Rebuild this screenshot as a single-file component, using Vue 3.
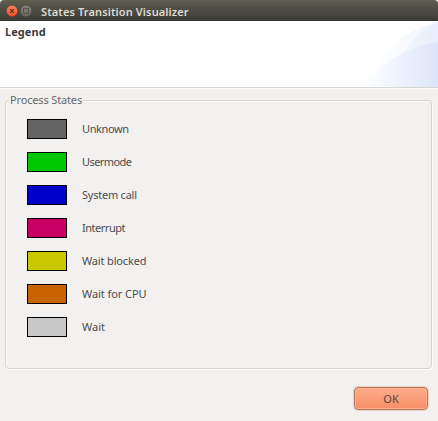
<script setup>
const states = [
  { name: 'Unknown', color: '#646464', width: 47 },
  { name: 'Usermode', color: '#00c800', width: 50 },
  { name: 'System call', color: '#0000c8', width: 55 },
  { name: 'Interrupt', color: '#c80064', width: 43.5 },
  { name: 'Wait blocked', color: '#c8c800', width: 64.5 },
  { name: 'Wait for CPU', color: '#c86400', width: 64.5 },
  { name: 'Wait', color: '#c8c8c8', width: 23 },
]
</script>

<template>
  <div class="window">
    <header class="titlebar">
      <svg class="controls" width="29" height="21" viewBox="0 0 29 21">
        <defs>
          <linearGradient id="close" x1="0" y1="0" x2="0" y2="1">
            <stop offset="0" stop-color="#f78360" />
            <stop offset="1" stop-color="#e9531f" />
          </linearGradient>
          <linearGradient id="max" x1="0" y1="0" x2="0" y2="1">
            <stop offset="0" stop-color="#85837c" />
            <stop offset="1" stop-color="#65645e" />
          </linearGradient>
        </defs>
        <circle cx="7" cy="11" r="5.7" fill="url(#close)" stroke="#46342b" stroke-width=".4" />
        <path d="M5.2 9.2l3.6 3.6M8.8 9.2l-3.6 3.6" stroke="#5a2c1c" stroke-width="1.1" />
        <circle cx="21" cy="11" r="5.7" fill="url(#max)" stroke="#44433d" stroke-width=".4" />
        <rect x="18.5" y="8.5" width="5" height="5" fill="none" stroke="#55544d" />
      </svg>
      <h1>States Transition Visualizer</h1>
    </header>
    <section class="banner">
      <h2>Legend</h2>
      <svg class="swoosh" width="75" height="66" viewBox="0 0 75 66">
        <defs>
          <linearGradient id="outer" gradientUnits="userSpaceOnUse" x1="5" x2="60" y1="0" y2="0">
            <stop offset="0" stop-color="#fff" />
            <stop offset="1" stop-color="#f4f7fe" />
          </linearGradient>
          <linearGradient id="petal" gradientUnits="userSpaceOnUse" x1="39" x2="75" y1="0" y2="0">
            <stop offset="0" stop-color="#f3f7fe" />
            <stop offset="1" stop-color="#e6edfb" />
          </linearGradient>
          <linearGradient id="inner" gradientUnits="userSpaceOnUse" x1="2" x2="75" y1="0" y2="0">
            <stop offset="0" stop-color="#fdfeff" />
            <stop offset=".5" stop-color="#edf2fc" />
            <stop offset="1" stop-color="#dbe4f8" />
          </linearGradient>
        </defs>
        <path d="M3 66C12 35 39 9 75 1V66Z" fill="url(#outer)" />
        <path d="M40 34C47 19 60 6 75 1V34Z" fill="url(#petal)" />
        <path d="M2 66C17 42 43 26 75 21V66Z" fill="url(#inner)" />
      </svg>
    </section>
    <main class="content">
      <section class="group">
        <h3>Process States</h3>
        <ul>
          <li v-for="state in states" :key="state.name">
            <span class="swatch" :style="{ background: state.color }"></span>
            <svg class="label" width="80" height="20">
              <text x="0" y="14" :textLength="state.width">{{ state.name }}</text>
            </svg>
          </li>
        </ul>
      </section>
      <footer><button type="button">OK</button></footer>
    </main>
  </div>
</template>

<style>
body { background: #f2f1f0; }
</style>
<style scoped>
* { box-sizing: border-box; margin: 0; padding: 0; }
.window {
  display: flex;
  flex-direction: column;
  height: 421px;
  font: 11px/20px "Noto Sans", "Open Sans", sans-serif;
  color: #4c4c4c;
  background: #f2f1f0;
}
.titlebar {
  display: flex;
  height: 21px;
  padding-left: 5px;
  border-top: 1px solid #625f50;
  border-bottom: 1px solid #383733;
  border-radius: 4px 4px 0 0;
  background: linear-gradient(#5d5b4d, #3d3c38);
  overflow: hidden;
}
.controls { flex: none; margin-top: -1px; }
.titlebar h1 {
  margin-left: 7px;
  font-size: 11px;
  line-height: 21px;
  font-weight: 600;
  letter-spacing: 0.12px;
  white-space: nowrap;
  color: #dfdbd2;
}
.banner {
  display: flex;
  justify-content: space-between;
  height: 68px;
  padding-left: 5px;
  background: #fff;
  border-bottom: 1px solid #fbfbfa;
  box-shadow: inset 0 -1px #d7d6d6;
}
.banner h2 {
  font-size: 11px;
  line-height: 22px;
  font-weight: 700;
  letter-spacing: 0.05px;
  color: #3c3c3c;
}
.content { flex: 1; padding: 11px 6px 0 5px; }
.group {
  height: 269px;
  border: 1px solid #d6d5d4;
  border-radius: 4px;
  box-shadow: 1px 1px #fcfcfb, inset 1px 1px #fcfcfb;
}
.group h3 {
  width: 74px;
  height: 16px;
  margin: -9px 0 0 3px;
  padding-left: 1px;
  background: #f2f1f0;
  font-size: 11px;
  line-height: 16px;
  font-weight: 400;
  letter-spacing: -0.15px;
  white-space: nowrap;
  color: #686868;
}
ul { display: grid; gap: 13px; padding: 11px 0 0 21px; list-style: none; }
li { display: flex; gap: 15px; height: 20px; }
.swatch { width: 40px; height: 20px; border: 1px solid #000; }
.label { display: block; fill: #4c4c4c; font-size: 11px; }
footer { display: flex; justify-content: flex-end; padding: 18px 4px 0 0; }
button {
  width: 74px;
  height: 23px;
  border: 1px solid #b9765b;
  border-radius: 4px;
  background: linear-gradient(#ffac8a, #f58e67);
  box-shadow: inset 0 0 0 1px #ffb08f, 0 0 0 1px #ecd0c5;
  font: 11px/19px "Noto Sans", "Open Sans", sans-serif;
  color: #4c4c4c;
}
</style>
